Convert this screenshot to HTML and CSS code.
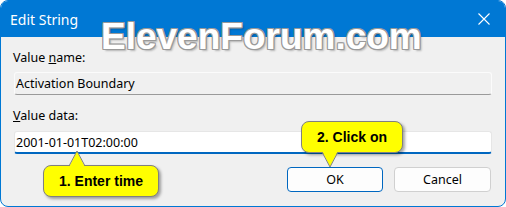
FILE: index.html
```
<!DOCTYPE html>
<html lang="en">
<head>
    <meta charset="UTF-8">
    <title>Edit String</title>
    <link rel="stylesheet" href="styles.css">
</head>
<body>
    <div class="window">
        <div class="titlebar">
            <span class="title">Edit String</span>
            <svg class="close" width="12" height="12" viewBox="0 0 12 12">
                <path d="M0.5 0.5 L11.5 11.5 M11.5 0.5 L0.5 11.5" stroke="#fff" stroke-width="1.1" fill="none"/>
            </svg>
        </div>

        <div class="content">
            <label class="field-label">Value <u>n</u>ame:</label>
            <div class="textbox readonly">Activation Boundary</div>

            <label class="field-label second">
                <u>V</u>alue data:</label>
            <div class="textbox focused">2001-01-01T02:00:00</div>

            <div class="buttons">
                <button class="btn default">OK</button>
                <button class="btn">Cancel</button>
            </div>
        </div>

        <!-- watermark + annotation callouts sit on top of the dialog -->
        <div class="watermark">ElevenForum.com</div>

        <div class="callout callout-time">
            1. Enter time
            <svg class="pointer up" width="18" height="17" viewBox="0 0 18 17">
                <polygon points="1,17 9,1 17,17" fill="#ffff00"/>
                <polyline points="1,16 9,1 17,16" fill="none" stroke="#808080" stroke-width="1"/>
            </svg>
        </div>

        <div class="callout callout-ok">
            2. Click on
            <svg class="pointer down" width="18" height="17" viewBox="0 0 18 17">
                <polygon points="1,0 9,16 17,0" fill="#ffff00"/>
                <polyline points="1,1 9,16 17,1" fill="none" stroke="#808080" stroke-width="1"/>
            </svg>
        </div>
    </div>
</body>
</html>
```

FILE: styles.css
```
body {
    margin: 0;
    background: #fff;
    font-family: "Noto Sans", sans-serif;
}

.window {
    position: relative;
    width: 506px;
    height: 207px;
    box-sizing: border-box;
    border: 1px solid #0078d4;
    border-radius: 8px;
    background: #f0f0f0;
    overflow: hidden;
}

.titlebar {
    height: 36px;
    background: #0078d4;
    display: flex;
    align-items: center;
    justify-content: space-between;
    padding: 0 15px 0 9px;
}

.title {
    color: #fff;
    font-size: 14px;
}

.content {
    padding: 13px 13px 0 12px;
    font-size: 12.5px;
    color: #000;
}

.field-label {
    display: block;
    line-height: 16px;
}

.field-label.second {
    margin-top: 13px;
}

.textbox {
    margin: 6px 0 0 1px;
    height: 23px;
    box-sizing: border-box;
    padding: 0 1px;
    line-height: 21px;
    border: 1px solid #e6e6e6;
    border-radius: 3px;
}

.textbox.readonly {
    background: #f0f0f0;
    border-color: #fbfbfb #fbfbfb #9a9a9a #fbfbfb;
}

.textbox.focused {
    margin-top: 7px;
    background: #fff;
    border-bottom: 2px solid #0067c0;
}

.buttons {
    display: flex;
    justify-content: flex-end;
    gap: 11px;
    margin: 13px 1px 0 0;
}

.btn {
    width: 97px;
    height: 25px;
    font-family: "Noto Sans", sans-serif;
    font-size: 12.5px;
    color: #000;
    background: #fdfdfd;
    border: 1px solid #d0d0d0;
    border-radius: 4px;
    padding: 0;
}

.btn.default {
    width: 96px;
    border-color: #0067c0;
}

.watermark {
    position: absolute;
    left: 100px;
    top: 17px;
    font-family: "Liberation Sans", Arial, sans-serif;
    font-weight: bold;
    font-size: 37px;
    line-height: 37px;
    color: #fff;
    text-shadow:
        1px 0 0 #9a9a9a, -1px 0 0 #9a9a9a,
        0 1px 0 #9a9a9a, 0 -1px 0 #9a9a9a,
        1px 1px 0 #9a9a9a, -1px -1px 0 #9a9a9a,
        1px -1px 0 #9a9a9a, -1px 1px 0 #9a9a9a,
        2px 2px 2px rgba(0, 0, 0, 0.25);
}

.callout {
    position: absolute;
    height: 32px;
    box-sizing: border-box;
    background: #ffff00;
    border: 1px solid #808080;
    border-radius: 8px;
    box-shadow: 2px 2px 3px rgba(0, 0, 0, 0.35);
    font-family: "Liberation Sans", Arial, sans-serif;
    font-weight: bold;
    font-size: 14px;
    line-height: 30px;
    text-align: center;
    color: #000;
}

.callout-time {
    left: 42px;
    top: 164px;
    width: 116px;
}

.callout-ok {
    left: 300px;
    top: 120px;
    width: 102px;
}

.pointer {
    position: absolute;
}

.pointer.up {
    left: 24px;
    top: -16px;
}

.pointer.down {
    left: 19px;
    bottom: -16px;
}
```
